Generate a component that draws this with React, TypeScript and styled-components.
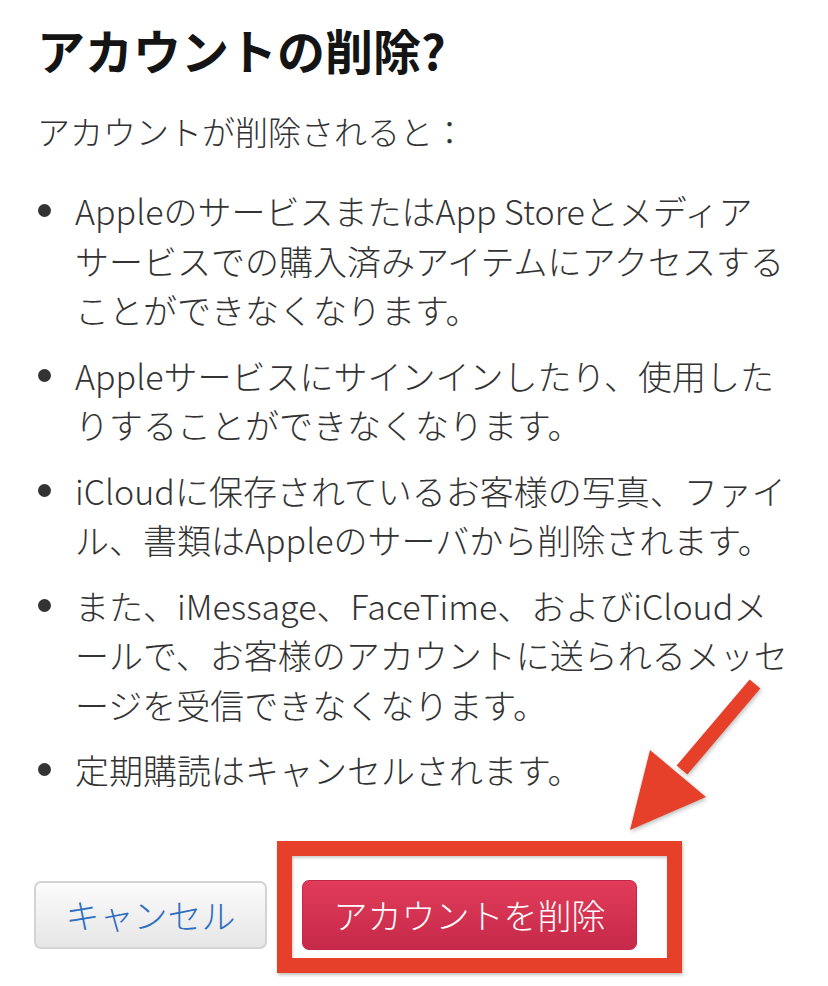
import React from "react";
import styled, { createGlobalStyle } from "styled-components";

const Global = createGlobalStyle`
  html, body { margin: 0; padding: 0; background: #ffffff; }
  body { font-family: "Noto Sans CJK JP", "Noto Sans", sans-serif; }
`;

const Page = styled.div`
  position: relative;
  width: 828px;
  height: 986px;
  overflow: hidden;
  box-sizing: border-box;
  padding: 19px 0 0 37px;
  background: #fff;
`;

const Title = styled.h1`
  margin: 0;
  font-size: 48px;
  line-height: 60px;
  font-weight: 700;
  color: #141414;
  letter-spacing: 0;
`;

const Lead = styled.p`
  margin: 27px 0 0 0;
  font-size: 33px;
  line-height: 50px;
  font-weight: 300;
  color: #333;
`;

const List = styled.ul`
  list-style: none;
  margin: 30px 0 0 0;
  padding: 0;
  display: flex;
  flex-direction: column;
  gap: 16px;
`;

const Item = styled.li<{ $spacing?: number }>`
  display: flex;
  align-items: flex-start;
  font-size: 34px;
  line-height: 49.5px;
  font-weight: 300;
  color: #333;
  letter-spacing: ${(p) => p.$spacing ?? 0}px;
`;

const Dot = styled.span`
  flex: none;
  width: 13px;
  height: 13px;
  border-radius: 50%;
  background: #333;
  margin: 18px 24px 0 1px;
`;

const ItemText = styled.span`
  white-space: nowrap;
`;

const Buttons = styled.div`
  display: flex;
  gap: 35px;
  margin-top: 86px;
  margin-left: -3px;
`;

const CancelButton = styled.button`
  width: 233px;
  height: 68px;
  box-sizing: border-box;
  border: 2px solid #d3d3d3;
  border-radius: 7px;
  background: linear-gradient(#fbfbfb, #e6e6e6);
  color: #2f6fc0;
  font-family: "Noto Sans CJK JP", sans-serif;
  font-size: 34px;
  font-weight: 300;
  padding: 0;
`;

const DeleteWrap = styled.div`
  position: relative;
  margin-top: -1px;
`;

const DeleteButton = styled.button`
  width: 335px;
  height: 70px;
  box-sizing: border-box;
  border: 1px solid #c02746;
  border-radius: 7px;
  background: linear-gradient(#e13c5a, #c62949);
  color: #fff;
  font-family: "Noto Sans CJK JP", sans-serif;
  font-size: 34px;
  font-weight: 300;
  padding: 0;
`;

const Frame = styled.div`
  position: absolute;
  top: -39px;
  left: -25px;
  right: -45px;
  bottom: -23px;
  border: 15px solid #e6402a;
  box-shadow: 1px 2px 3px rgba(0, 0, 0, 0.25), inset 1px 2px 3px rgba(0, 0, 0, 0.2);
  pointer-events: none;
`;

const Arrow = styled.svg`
  position: absolute;
  left: 620px;
  top: 670px;
  overflow: visible;
  filter: drop-shadow(1px 2px 2px rgba(0, 0, 0, 0.25));
`;

const bullets: { lines: string[]; spacing?: number }[] = [
  { lines: ["AppleのサービスまたはApp Storeとメディア", "サービスでの購入済みアイテムにアクセスする", "ことができなくなります。"] },
  { lines: ["Appleサービスにサインインしたり、使用した", "りすることができなくなります。"] },
  { lines: ["iCloudに保存されているお客様の写真、ファイ", "ル、書類はAppleのサーバから削除されます。"] },
  { lines: ["また、iMessage、FaceTime、およびiCloudメ", "ールで、お客様のアカウントに送られるメッセ", "ージを受信できなくなります。"] },
  { lines: ["定期購読はキャンセルされます。"] },
];

export default function App() {
  return (
    <>
      <Global />
      <Page>
        <Title>アカウントの削除?</Title>
        <Lead>アカウントが削除されると：</Lead>
        <List>
          {bullets.map((b, i) => (
            <Item key={i} $spacing={b.spacing}>
              <Dot />
              <ItemText>
                {b.lines.map((l, j) => (
                  <React.Fragment key={j}>
                    {j > 0 && <br />}
                    {l}
                  </React.Fragment>
                ))}
              </ItemText>
            </Item>
          ))}
        </List>
        <Buttons>
          <CancelButton>キャンセル</CancelButton>
          <DeleteWrap>
            <DeleteButton>アカウントを削除</DeleteButton>
            <Frame />
          </DeleteWrap>
        </Buttons>
        <Arrow width="140" height="165" viewBox="0 0 140 165">
          <line x1="135" y1="14" x2="62" y2="100" stroke="#e6402a" strokeWidth="14" />
          <polygon points="10,160 30,80 86,127" fill="#e6402a" />
        </Arrow>
      </Page>
    </>
  );
}
